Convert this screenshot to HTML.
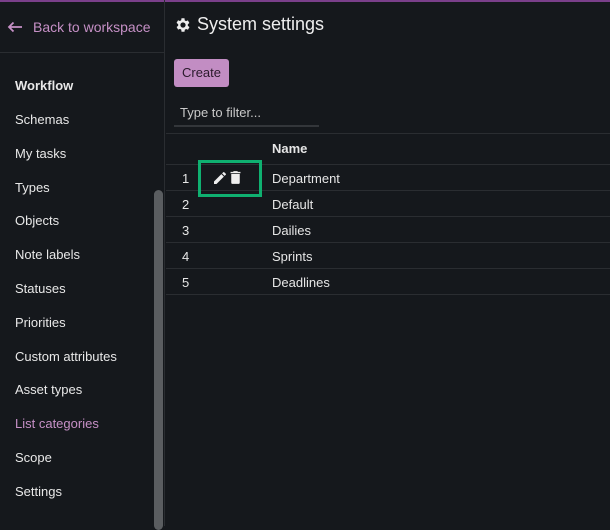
<!DOCTYPE html>
<html><head><style>
*{box-sizing:border-box;margin:0;padding:0}
body{width:610px;height:526px;background:#15181c;font-family:"Liberation Sans",sans-serif;color:#e6e6e6;position:relative;overflow:hidden;font-size:13px}
.top{position:absolute;left:0;top:0;width:610px;height:2px;background:#7a3f8a}
.side{position:absolute;left:0;top:0;width:165px;height:526px;border-right:1px solid #2a2d31}
.back{position:absolute;left:0;top:0;width:165px;height:53px;border-bottom:1px solid #2a2d31;color:#c690c6;font-size:14px}
.back .t{position:absolute;left:33px;top:19px}
.item{position:absolute;left:15px;font-size:13px;color:#e8e8e8}
.sb{position:absolute;left:154px;top:190px;width:9px;height:340px;background:#5a5d60;border-radius:5px}
h1{position:absolute;left:197px;top:14px;font-size:18px;font-weight:normal;color:#eee}
.btn{position:absolute;left:174px;top:59px;width:55px;height:28px;background:#c28dc3;border-radius:3px;color:#2a1a2c;font-size:13px;text-align:center;line-height:28px}
.filter{position:absolute;left:174px;top:105px;width:145px;height:22px;border-bottom:2px solid #33363a;color:#c9c9c9;font-size:13px;padding-left:6px}
.line{position:absolute;left:166px;width:444px;height:1px;background:#2a2d31}
.num{position:absolute;left:182px;font-size:13px}
.name{position:absolute;left:272px;font-size:13px}
.box{position:absolute;left:198px;top:160px;width:64px;height:37px;border:3px solid #0fb070}
</style></head><body>
<div class="top"></div>
<div class="side">
<div class="back"><svg style="position:absolute;left:7px;top:21px" width="16" height="12" viewBox="0 0 16 12"><path d="M15 6H2M6.5 1.5L2 6l4.5 4.5" stroke="#c690c6" stroke-width="1.8" fill="none"/></svg><span class="t">Back to workspace</span></div>
<div class="item" style="top:78px;font-weight:bold">Workflow</div>
<div class="item" style="top:112px">Schemas</div>
<div class="item" style="top:146px">My tasks</div>
<div class="item" style="top:180px">Types</div>
<div class="item" style="top:213px">Objects</div>
<div class="item" style="top:247px">Note labels</div>
<div class="item" style="top:281px">Statuses</div>
<div class="item" style="top:315px">Priorities</div>
<div class="item" style="top:349px">Custom attributes</div>
<div class="item" style="top:382px">Asset types</div>
<div class="item" style="top:416px;color:#c690c6">List categories</div>
<div class="item" style="top:450px">Scope</div>
<div class="item" style="top:484px">Settings</div>
<div class="sb"></div>
</div>
<svg style="position:absolute;left:174px;top:16px" width="18" height="18" viewBox="0 0 24 24"><path fill="#eee" d="M19.4 13a7.5 7.5 0 000-2l2.1-1.6-2-3.5-2.5 1a7.6 7.6 0 00-1.7-1L15 3h-4l-.4 2.6a7.6 7.6 0 00-1.7 1l-2.5-1-2 3.5L6.6 11a7.5 7.5 0 000 2l-2.1 1.6 2 3.5 2.5-1a7.6 7.6 0 001.7 1L11 21h4l.4-2.6a7.6 7.6 0 001.7-1l2.5 1 2-3.5zM13 15.5a3.5 3.5 0 110-7 3.5 3.5 0 010 7z" transform="translate(-1 0)"/></svg>
<h1>System settings</h1>
<div class="btn">Create</div>
<div class="filter">Type to filter...</div>
<div class="line" style="top:133px"></div>
<div class="name" style="top:141px;font-weight:bold">Name</div>
<div class="line" style="top:164px"></div>
<div class="line" style="top:190px"></div>
<div class="line" style="top:216px"></div>
<div class="line" style="top:242px"></div>
<div class="line" style="top:268px"></div>
<div class="line" style="top:294px"></div>
<div class="num" style="top:171px">1</div><div class="name" style="top:171px">Department</div>
<div class="num" style="top:197px">2</div><div class="name" style="top:197px">Default</div>
<div class="num" style="top:223px">3</div><div class="name" style="top:223px">Dailies</div>
<div class="num" style="top:249px">4</div><div class="name" style="top:249px">Sprints</div>
<div class="num" style="top:275px">5</div><div class="name" style="top:275px">Deadlines</div>
<div class="box"></div>
<svg style="position:absolute;left:212px;top:170px" width="16" height="16" viewBox="0 0 24 24"><path fill="#eee" d="M3 17.25V21h3.75L17.8 9.94l-3.75-3.75zM20.7 7.04a1 1 0 000-1.41l-2.34-2.34a1 1 0 00-1.41 0l-1.83 1.83 3.75 3.75z"/></svg>
<svg style="position:absolute;left:227px;top:169px" width="17" height="17" viewBox="0 0 24 24"><path fill="#eee" d="M6 19a2 2 0 002 2h8a2 2 0 002-2V7H6zM19 4h-3.5l-1-1h-5l-1 1H5v2h14z"/></svg>
</body></html>
